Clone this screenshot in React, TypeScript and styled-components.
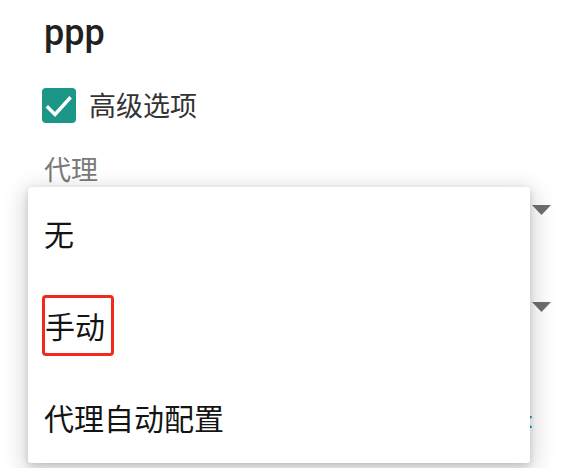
import React from "react";
import styled, { createGlobalStyle } from "styled-components";

const Global = createGlobalStyle`
  html, body { margin: 0; padding: 0; background: #ffffff; }
  body { font-family: "Noto Sans CJK SC", Roboto, "Noto Sans", sans-serif; }
  * { box-sizing: border-box; }
`;

const Page = styled.div`
  position: relative;
  width: 579px;
  height: 468px;
  overflow: hidden;
  padding: 12px 28px 0 44px;
`;

const Title = styled.h1`
  margin: 0;
  font-family: Roboto, "Noto Sans", sans-serif;
  font-weight: 500;
  font-size: 36px;
  line-height: 42px;
  color: #212121;
`;

const CheckRow = styled.label`
  display: flex;
  align-items: center;
  gap: 13px;
  height: 34px;
  margin-top: 34px;
  font-size: 27px;
  line-height: 34px;
  color: #333333;
`;

const CheckBox = styled.span`
  display: flex;
  align-items: center;
  justify-content: center;
  width: 34px;
  height: 35px;
  margin-left: -2px;
  border-radius: 4px;
  background: #1c9787;
`;

const FieldLabel = styled.div`
  margin-top: 29px;
  font-size: 27px;
  line-height: 36px;
  color: #7a7a7a;
`;

const SelectRow = styled.div<{ $gap?: number }>`
  display: flex;
  justify-content: flex-end;
  align-items: center;
  height: 45px;
  margin-top: ${(p) => p.$gap ?? 0}px;
`;

const TealMark = styled.div`
  display: flex;
  justify-content: flex-end;
  height: 24px;
  margin-top: 80px;
  margin-right: 18px;
  font-family: Roboto, sans-serif;
  font-size: 22px;
  line-height: 24px;
  color: #1c9787;
`;

const Menu = styled.ul`
  position: absolute;
  top: 187px;
  left: 28px;
  width: 502px;
  margin: 0;
  padding: 0;
  list-style: none;
  background: #ffffff;
  border-radius: 3px;
  box-shadow: 0 6px 22px 4px rgba(0, 0, 0, 0.17), 0 2px 6px rgba(0, 0, 0, 0.14);
`;

const Item = styled.li`
  display: flex;
  align-items: center;
  height: 92px;
  padding-left: 16px;
  font-size: 30px;
  line-height: 36px;
  color: #141414;
`;

const Highlight = styled.span`
  display: inline-block;
  margin-left: -2px;
  padding: 9.5px 6px 9.5px 0;
  border: 3px solid #f2291d;
  border-radius: 4px;
`;

const Arrow = () => (
  <svg width="19" height="10" viewBox="0 0 19 10">
    <path d="M0 0 H19 L9.5 10 Z" fill="#6f6f6f" />
  </svg>
);

export default function App() {
  return (
    <>
      <Global />
      <Page>
        <Title>ppp</Title>
        <CheckRow>
          <CheckBox>
            <svg width="34" height="34" viewBox="0 0 34 34">
              <path
                d="M6 19.5 L13 26.5 L27.5 10.5"
                fill="none"
                stroke="#ffffff"
                strokeWidth="3.4"
                strokeLinecap="square"
              />
            </svg>
          </CheckBox>
          高级选项
        </CheckRow>
        <FieldLabel>代理</FieldLabel>
        <SelectRow>
          <Arrow />
        </SelectRow>
        <SelectRow $gap={52}>
          <Arrow />
        </SelectRow>
        <TealMark>:</TealMark>
        <Menu>
          <Item>无</Item>
          <Item>
            <Highlight>手动</Highlight>
          </Item>
          <Item>代理自动配置</Item>
        </Menu>
      </Page>
    </>
  );
}
